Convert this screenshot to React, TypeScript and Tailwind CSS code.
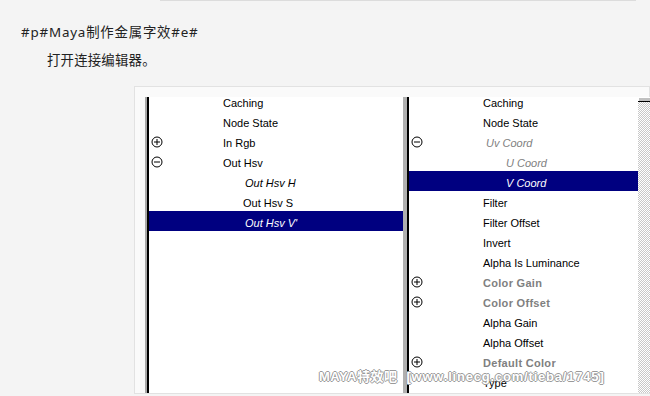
import React from "react";

type Row = {
  text: string;
  indent: number;
  icon?: "plus" | "minus";
  style?: "normal" | "italic" | "grayItalic" | "grayBold";
  selected?: boolean;
};

const Icon = ({ kind }: { kind: "plus" | "minus" }) => (
  <svg width="12" height="12" viewBox="0 0 12 12" className="block">
    <circle cx="6" cy="6" r="5" fill="none" stroke="#000" strokeWidth="1" />
    <line x1="3" y1="6" x2="9" y2="6" stroke="#000" strokeWidth="1" />
    {kind === "plus" && <line x1="6" y1="3" x2="6" y2="9" stroke="#000" strokeWidth="1" />}
  </svg>
);

const leftRows: Row[] = [
  { text: "Caching", indent: 74 },
  { text: "Node State", indent: 74 },
  { text: "In Rgb", indent: 74, icon: "plus" },
  { text: "Out Hsv", indent: 74, icon: "minus" },
  { text: "Out Hsv H", indent: 96, style: "italic" },
  { text: "Out Hsv S", indent: 94 },
  { text: "Out Hsv V'", indent: 96, style: "italic", selected: true },
];

const rightRows: Row[] = [
  { text: "Caching", indent: 74 },
  { text: "Node State", indent: 74 },
  { text: "Uv Coord", indent: 77, icon: "minus", style: "grayItalic" },
  { text: "U Coord", indent: 97, style: "grayItalic" },
  { text: "V Coord", indent: 97, style: "italic", selected: true },
  { text: "Filter", indent: 74 },
  { text: "Filter Offset", indent: 74 },
  { text: "Invert", indent: 74 },
  { text: "Alpha Is Luminance", indent: 74 },
  { text: "Color Gain", indent: 74, icon: "plus", style: "grayBold" },
  { text: "Color Offset", indent: 74, icon: "plus", style: "grayBold" },
  { text: "Alpha Gain", indent: 74 },
  { text: "Alpha Offset", indent: 74 },
  { text: "Default Color", indent: 74, icon: "plus", style: "grayBold" },
  { text: "Type", indent: 74 },
];

const RowView = ({ r }: { r: Row }) => {
  const st = r.style ?? "normal";
  let cls = "text-black";
  if (r.selected) cls = "text-white italic";
  else if (st === "italic") cls = "text-black italic";
  else if (st === "grayItalic") cls = "text-[#808080] italic";
  else if (st === "grayBold") cls = "text-[#808080] font-bold tracking-[0.3px]";
  return (
    <div className={`flex h-[20px] items-center pt-[4px] ${r.selected ? "bg-[#000080]" : ""}`}>
      <div className="w-[14px] pl-[2px] -mt-[3px] shrink-0">{r.icon && <Icon kind={r.icon} />}</div>
      <span className={`whitespace-nowrap ${cls}`} style={{ marginLeft: r.indent - 14 }}>
        {r.text}
      </span>
    </div>
  );
};

export default function App() {
  return (
    <div className="w-[650px] h-[396px] overflow-hidden bg-[#f4f4f4] relative">
      <div className="ml-[160px] w-[476px] h-px bg-[#dcdcdc]" />
      <div className="[font-family:'Noto_Sans','Noto_Sans_CJK_SC',sans-serif] text-[13.4px] text-[#222] leading-[20px]">
        <div className="mt-[21px] ml-[21px] tracking-[0.8px]">#p#Maya制作金属字效#e#</div>
        <div className="mt-[8px] ml-[47px] tracking-[0.2px]">打开连接编辑器。</div>
      </div>
      <div className="mt-[16px] ml-[134px] border border-[#e2e2e2] bg-[#fafafa] pl-[10px] pt-[10px]">
        <div className="flex h-[296px] w-[505px] [font-family:'Liberation_Sans',Arial,sans-serif] text-[11px] leading-none">
          <div className="w-[2px] bg-[#a8a8a8]" />
          <div className="w-[2px] bg-black" />
          <div className="w-[254px] bg-white overflow-hidden">
            <div className="-mt-[6px]">
              {leftRows.map((r, i) => (
                <RowView key={i} r={r} />
              ))}
            </div>
          </div>
          <div className="w-[4px] bg-[#b0b0b0]" />
          <div className="w-[2px] bg-black" />
          <div className="w-[229px] bg-white overflow-hidden">
            <div className="-mt-[6px]">
              {rightRows.map((r, i) => (
                <RowView key={i} r={r} />
              ))}
            </div>
          </div>
          <div className="w-[12px] flex flex-col">
            <div className="h-[4px] bg-[#c0c0c0] border-l border-t border-white" />
            <div className="h-[1px] bg-black" />
            <div className="flex-1 bg-[image:repeating-conic-gradient(#c8c8c8_0_25%,#ffffff_0_50%)] bg-[length:2px_2px]" />
          </div>
        </div>
      </div>
      <div className="absolute left-[319px] top-[369px] flex items-center gap-[9px] text-[13px] font-bold text-white leading-[16px] [font-family:'Liberation_Sans','Noto_Sans_CJK_SC',sans-serif] [text-shadow:1px_0_#9a9a9a,-1px_0_#9a9a9a,0_1px_#9a9a9a,0_-1px_#9a9a9a]">
        <span className="tracking-[0.5px]">MAYA特效吧</span>
        <span className="tracking-[0.8px]">[www.linecg.com/tieba/1745]</span>
      </div>
    </div>
  );
}
